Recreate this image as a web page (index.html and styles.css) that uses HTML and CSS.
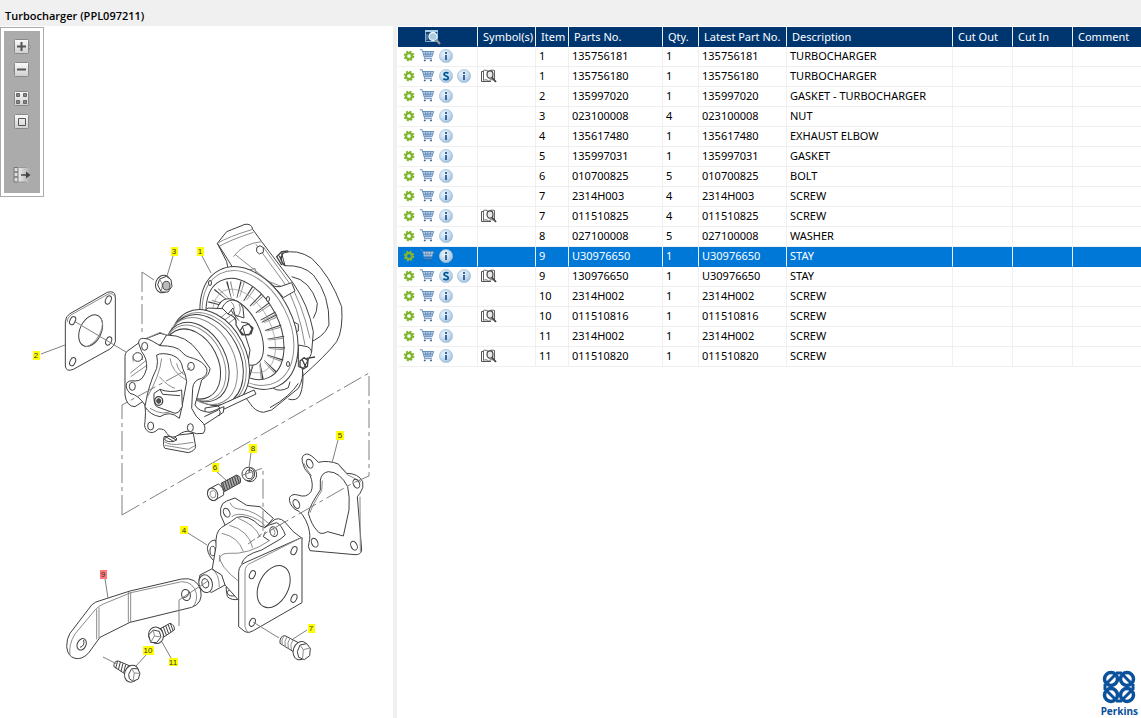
FILE: index.html
```html
<!DOCTYPE html>
<html lang="en">
<head>
<meta charset="utf-8">
<title>Turbocharger (PPL097211)</title>
<link rel="stylesheet" href="styles.css">
</head>
<body>
<svg class="sprite" aria-hidden="true">
  <defs>
    <radialGradient id="ball" cx=".4" cy=".35" r=".7"><stop offset="0" stop-color="#eef6fc"/><stop offset=".6" stop-color="#c2d9ed"/><stop offset="1" stop-color="#9bbcd9"/></radialGradient>
    <linearGradient id="key" x1="0" y1="0" x2="0" y2="1"><stop offset="0" stop-color="#fafafa"/><stop offset="1" stop-color="#cfcfcf"/></linearGradient>
    <linearGradient id="fade"><stop offset="0" stop-color="#eee"/><stop offset="1" stop-color="#ababab"/></linearGradient>
  </defs>
  <symbol id="gear" viewBox="0 0 12 12"><circle cx="6" cy="6" r="4.300" fill="none" stroke="#80b630" stroke-width="2" stroke-dasharray="1.900 1.477"/><circle cx="6" cy="6" r="3" fill="none" stroke="#80b630" stroke-width="2.300"/></symbol>
  <symbol id="cart" viewBox="0 0 18 16"><path d="M4 3.500H16.500L14.500 9.500H5.500Z" fill="#c5d8ea"/><path d="M1 1.500H3.500L6.500 11.500H14.500M4 3.500H16.500L14.500 9.500H6M7 3.500L8 9.500M10 3.500V9.500M13.500 3.500L12 9.500M5 6.500H15.500" fill="none" stroke="#5a86b8"/><circle cx="6.500" cy="13.500" r="1.100" fill="#365f94"/><circle cx="13.500" cy="13.500" r="1.100" fill="#365f94"/></symbol>
  <symbol id="info" viewBox="0 0 14 14"><circle cx="7" cy="7" r="6.600" fill="url(#ball)" stroke="#a4c1da" stroke-width=".7"/><path d="M6 3h2v2H6zM6 6h2v5H6z" fill="#39699c"/></symbol>
  <symbol id="sub" viewBox="0 0 14 14"><circle cx="7" cy="7" r="6.600" fill="url(#ball)" stroke="#a4c1da" stroke-width=".7"/><path d="M9.500 4.400C8 3.200 5 3.300 5 5.200S9.300 6.700 9.300 8.900 6 11 4.400 9.700" fill="none" stroke="#00589a" stroke-width="1.800"/></symbol>
  <symbol id="book" viewBox="0 0 16 14"><path d="M2.500 1.500C4 .8 6 1 7.500 2.500 9 1 11.500 .8 13.500 1.500V11C11 10.500 9 10.500 7.500 12 6 10.500 4 10.500 2.500 11.500Z" fill="#fff" stroke="#666"/><path d="M2 2.500H.5V12.500H10" fill="none" stroke="#555"/><ellipse cx="9" cy="5.500" rx="3" ry="3.700" fill="#e8ebec" stroke="#444" stroke-width="1.200"/><path d="M11 8.500L15 13" stroke="#444" stroke-width="1.800"/></symbol>
</svg>

<header class="titlebar"><h1>Turbocharger (PPL097211)</h1></header>
<main class="workspace">
  <section class="drawing" aria-label="Parts drawing">
    <div class="tools">
      <div class="tools-inner">
        <button aria-label="Zoom in"><svg viewBox="0 0 18 16"><path d="M15.500 5L17.500 8 15.500 11" fill="#ddd" stroke="#888"/><rect x="1.500" y=".5" width="14" height="14" rx="1" fill="url(#key)" stroke="#888"/><path d="M4 7.500H13M8.500 3V12" stroke="#555" stroke-width="2"/></svg></button>
        <button aria-label="Zoom out"><svg viewBox="0 0 18 16"><path d="M2 5L.5 8 2 11" fill="#ddd" stroke="#888"/><rect x="1.500" y=".5" width="14" height="14" rx="1" fill="url(#key)" stroke="#888"/><path d="M4 7.500H13" stroke="#555" stroke-width="2"/></svg></button>
        <button class="group" aria-label="Fit all"><svg viewBox="0 0 18 16"><rect x="1.500" y=".5" width="14" height="14" rx="1" fill="url(#key)" stroke="#888"/><path d="M3.500 2.500h3v3h-3zM10.500 2.500h3v3h-3zM3.500 9.500h3v3h-3zM10.500 9.500h3v3h-3z" fill="#888" stroke="#666"/></svg></button>
        <button aria-label="Actual size"><svg viewBox="0 0 18 16"><rect x="1.500" y=".5" width="14" height="14" rx="1" fill="url(#key)" stroke="#888"/><path d="M5.500 4.500h7v7h-7z" fill="none" stroke="#555"/></svg></button>
        <button class="last" aria-label="Hide list"><svg viewBox="0 0 18 16"><rect x="5" y="1" width="12" height="14" fill="url(#fade)"/><path d="M1 .5h4v4.500H1zM1 5h4v5H1zM1 10h4v5H1z" fill="#ddd" stroke="#777"/><path d="M6 .5h7M6 15h7" stroke="#999"/><path d="M8 8h6" stroke="#444" stroke-width="1.500"/><path d="M13 4.500L17.500 8 13 11.500z" fill="#444"/></svg></button>
      </div>
    </div>

    <svg class="diagram" viewBox="0 26 393 692" role="img" aria-label="Exploded view of turbocharger">
      <!-- hot pipe and elbow behind the housing -->
      <g transform="translate(230 215) scale(.33333)" class="ink">
        <path d="M155 115Q200 100 245 130Q300 180 335 275Q340 345 320 380Q290 420 210 490L130 520 90 450 230 385Q280 370 297 330Q300 240 250 180Q220 150 165 152Z"/>
        <path d="M165 152Q145 135 160 113M155 150L140 125 155 110 175 108M148 122L160 150" class="line" stroke-width="4"/>
        <path d="M185 185Q240 195 262 265Q262 290 250 310" class="line"/>
        <path d="M-38 85L-10 50 45 28Q65 25 68 43L95 80 190 205Q235 270 250 350L245 410 190 500 20 300 -10 140Z"/>
        <path d="M-38 85Q-5 65 68 43M-34 95Q0 75 70 52M10 125Q40 85 95 80M78 88L160 200Q205 270 225 390M100 96L175 200Q215 260 240 370M15 118L130 210M60 165L75 160 82 185 155 215" class="mid"/>
        <path d="M105 195Q125 218 150 215L185 203 195 228 160 248Q145 225 105 195Z"/>
        <path d="M90 92l10 6 0 14-12 5-8-7 0-12z"/>
        <path d="M-38 85L-25 105 10 160" class="line"/>
        <path d="M190 320l15 8 0 20-15 5M190 400q30 0 35 25l-10 25-25-5" class="line"/>
      </g>
      <!-- compressor volute foot -->
      <g transform="translate(220 325) scale(.33333)" class="ink">
        <path d="M55 165Q65 205 90 235Q105 260 130 262L155 255 235 190Q252 160 247 130L230 90Z"/>
        <path d="M150 248Q210 215 235 175M205 222Q230 230 240 210Q252 180 248 140M160 190Q180 202 205 188L210 170" class="line"/>
        <path d="M235 60L262 65Q282 75 270 95L250 130 235 125Z"/><path d="M240 108l12-10 12 8-2 18-12 8-10-8zM247 105l10 20M260 100l25-4" class="line" stroke-width="4"/>
      </g>
      <!-- back plate and fins -->
      <g class="ink">
        <ellipse cx="249" cy="328" rx="44" ry="65" transform="rotate(-27 249 328)"/>
        <ellipse cx="248" cy="328" rx="41" ry="61" transform="rotate(-27 248 328)" class="mid"/>
        <ellipse cx="245" cy="329" rx="34" ry="54" transform="rotate(-27 245 329)"/>
        <g class="line">
          <ellipse cx="246" cy="330" rx="26" ry="44" transform="rotate(-27 246 330)" stroke-width="17" stroke-dasharray="1 9"/>
          <ellipse cx="247" cy="330" rx="26" ry="44" transform="rotate(-24 247 330)" stroke-width="15" stroke-dasharray=".8 9.200" class="mid"/>
          <ellipse cx="244" cy="331" rx="27" ry="45" transform="rotate(-27 244 331)" class="mid" stroke-width=".6"/>
        </g>
        <ellipse cx="240" cy="332" rx="19" ry="36" transform="rotate(-27 240 332)"/>
        <ellipse cx="210" cy="283" rx="1.500" ry="2.500"/><ellipse cx="268" cy="299" rx="1.500" ry="2.500"/><ellipse cx="288" cy="364" rx="1.500" ry="2.500"/>
      </g>
      <!-- bearing housing -->
      <g class="ink">
        <path d="M196 318L208 308 230 309 242 325 250 350 246 375 238 388 210 400Z"/>
        <path d="M218 320L232 308M221 323L235 312M224 327L238 316" class="mid"/>
        <ellipse cx="210" cy="358" rx="36" ry="51" transform="rotate(-27 210 358)"/>
        <ellipse cx="208" cy="359" rx="35" ry="49" transform="rotate(-27 208 359)" class="mid"/>
        <ellipse cx="206" cy="360" rx="34" ry="48" transform="rotate(-27 206 360)"/>
        <ellipse cx="202" cy="361" rx="32" ry="46" transform="rotate(-27 202 361)" class="mid"/>
        <ellipse cx="197" cy="362" rx="29" ry="42" transform="rotate(-27 197 362)"/>
        <ellipse cx="195" cy="363" rx="28" ry="40" transform="rotate(-27 195 363)" class="mid"/>
        <ellipse cx="192" cy="364" rx="26" ry="37" transform="rotate(-27 192 364)"/>
        <path d="M222 308Q226 300 233 300Q240 301 243 308L244 318 235 315 233 308 228 314Z"/>
        <path d="M228 314Q238 317 236 325L242 335 251 334 253 328 247 323 241 322M243 326l6-2 3 5-3 6-5 0-4-4z" stroke-width="1.200"/>
        <path d="M231 302Q236 306 233 312M239 304Q242 310 238 316" class="mid"/>
        <path d="M205 408L218 406 254 390 256 394 220 411 205 413Z"/><path d="M218 406Q223 410 219 415" class="line"/>
      </g>
      <!-- turbine inlet flange -->
      <g transform="translate(110 325) scale(.33333)" class="ink">
        <path d="M98 45L50 80Q45 85 45 95L45 210Q50 245 75 245L105 225 115 80 165 50 170 30 150 25Z"/>
        <path d="M98 45L150 22 168 30M60 145L110 105M62 155L115 118M70 110Q65 90 82 85Q98 88 98 105" class="mid"/>
        <ellipse cx="83" cy="96" rx="14" ry="13"/>
        <path d="M150 62L170 30Q230 30 265 80L300 130Q300 150 275 165L255 240Q265 260 300 262L342 245 340 262 285 298 240 320 180 300Z"/>
        <path d="M162 335Q158 365 165 370L235 383Q255 378 257 365L250 325Z"/>
        <path d="M163 350Q180 362 215 357L250 352M165 361L235 373 255 362" class="mid"/>
        <ellipse cx="182" cy="342" rx="18" ry="8"/><path d="M168 336L192 350M176 332L200 346" class="line"/>
        <path d="M86 55Q85 40 100 40Q115 40 130 50L150 62Q200 62 215 80Q225 95 250 100Q280 110 290 130Q295 150 275 160Q250 165 248 190L245 250Q255 275 280 295Q290 310 280 325Q260 330 240 320Q225 315 205 330Q185 345 170 325Q165 310 145 312Q130 328 115 320Q100 310 105 290Q108 260 105 240Q85 210 60 205Q45 190 50 175Q55 165 75 168Q100 170 110 130Q112 100 95 80Z"/>
        <path d="M140 90Q155 82 185 90Q215 100 218 130Q228 150 230 170L215 250 208 280Q180 255 150 275Q120 270 105 245Q115 180 140 130Q145 110 140 90Z"/>
        <path d="M148 155Q175 185 195 190M180 100Q185 140 228 165M110 220Q150 150 155 100M200 115Q205 140 225 150M120 250Q160 275 190 255" class="mid"/>
        <path d="M132 205L150 193Q180 205 215 195L217 245 205 262 195 265 140 245Q130 235 132 205ZM150 193L158 208 210 212"/>
        <ellipse cx="146" cy="228" rx="12" ry="13" stroke-width="4"/><ellipse cx="146" cy="228" rx="6" ry="7" fill="#555"/>
        <ellipse cx="104" cy="64" rx="9" ry="12"/><ellipse cx="67" cy="184" rx="9" ry="12"/><ellipse cx="122" cy="303" rx="9" ry="12"/><ellipse cx="241" cy="308" rx="9" ry="12"/><ellipse cx="243" cy="124" rx="10" ry="12"/>
        <path d="M283 275L325 255M325 250Q335 260 328 272" class="line"/>
      </g>
      <!-- gasket 2 -->
      <g transform="translate(20 280) scale(.33333)" class="ink">
        <path d="M136 125Q137 108 150 101L262 37Q285 30 286 50L286 185Q284 198 270 207L160 268Q138 277 136 258Z"/>
        <path d="M141 127Q142 112 153 105L265 42Q279 38 284 50" class="mid"/>
        <ellipse cx="212" cy="152" rx="32" ry="50" transform="rotate(25 212 152)"/><path d="M236 108Q258 125 238 165Q220 195 196 201" class="mid"/>
        <ellipse cx="265" cy="60" rx="8" ry="13" transform="rotate(24 265 60)"/><ellipse cx="158" cy="122" rx="8" ry="13" transform="rotate(24 158 122)"/><ellipse cx="158" cy="245" rx="8" ry="13" transform="rotate(24 158 245)"/><ellipse cx="266" cy="183" rx="8" ry="13" transform="rotate(24 266 183)"/>
      </g>
      <!-- nut 3 -->
      <g transform="translate(120 215) scale(.33333)" class="ink">
        <ellipse cx="129" cy="207" rx="22" ry="27" transform="rotate(20 129 207)"/><path d="M113 210l6-18 20-8 14 10 3 20-12 17-20 0z"/><path d="M119 192l8 16-3 22M127 208l20-4" class="mid"/><ellipse cx="139" cy="212" rx="11" ry="13" fill="#bbb"/>
      </g>
      <!-- gasket 5, bolt 6, washer 8 -->
      <g transform="translate(195 430) scale(.33333)" class="ink">
        <path d="M322 95Q318 75 335 72Q348 72 370 97Q400 90 430 102L455 130Q490 130 503 155Q508 172 495 190L487 200 500 360Q498 375 480 374L345 362Q337 350 342 338Q348 320 340 290Q325 245 300 238Q280 222 284 202Q292 190 308 195Q335 205 348 185Q357 165 345 135Q325 118 322 95Z"/>
        <path d="M376 150Q380 128 400 125Q435 125 458 170Q465 200 462 240L445 318 398 305Q375 318 365 300Q350 285 340 250Q345 225 376 180Z"/>
        <path d="M382 152L380 182Q355 220 345 248M432 106L457 134 498 155M495 200L496 365M327 100Q335 120 350 138" class="mid"/>
        <ellipse cx="344" cy="101" rx="9" ry="14" transform="rotate(-25 344 101)"/><ellipse cx="484" cy="161" rx="9" ry="14" transform="rotate(-25 484 161)"/><ellipse cx="304" cy="222" rx="9" ry="14" transform="rotate(-25 304 222)"/><ellipse cx="359" cy="338" rx="9" ry="14" transform="rotate(-25 359 338)"/><ellipse cx="477" cy="347" rx="9" ry="14" transform="rotate(-25 477 347)"/>
        <path d="M78 160L125 135Q140 140 136 158L88 185Z" fill="#aaa"/><path d="M83 158l8 25M90 154l8 25M97 150l8 25M104 146l8 25M111 142l8 25M118 139l8 24M125 136l8 24" class="line"/>
        <path d="M40 178L70 162Q88 172 86 195L58 212Q38 205 38 185Z"/><ellipse cx="53" cy="193" rx="15" ry="19" transform="rotate(-20 53 193)"/><path d="M46 185l10-4 7 8-2 12-9 3-7-8z" class="mid"/>
        <ellipse cx="165" cy="134" rx="20" ry="21"/><ellipse cx="160" cy="132" rx="19" ry="20"/><ellipse cx="163" cy="133" rx="11" ry="13"/><path d="M164 112l-2 17"/>
      </g>
      <!-- exhaust elbow 4 and bolt 7 -->
      <g transform="translate(180 500) scale(.33333)" class="ink">
        <path d="M82 145Q85 122 105 120L120 150 105 185Q85 170 82 145Z"/><ellipse cx="98" cy="153" rx="8" ry="14"/>
        <path d="M138 262L142 290Q155 302 175 298L185 260Z"/><ellipse cx="158" cy="278" rx="16" ry="10"/>
        <path d="M122 25Q125 8 140 3L165-6 200 16 240 20 280 55 240 100 135 75 122 45Z"/>
        <ellipse cx="140" cy="38" rx="9" ry="14" transform="rotate(-25 140 38)"/><path d="M150 8Q158 28 185 28Q225 32 268 72M155 50Q170 38 200 46Q235 55 256 78" class="mid"/>
        <path d="M108 140Q105 95 125 82Q155 65 170 52Q205 42 240 78L254 82 285 58Q305 50 325 78L340 95 366 115 270 230 175 300 135 255 97 205Z"/>
        <path d="M118 185Q115 160 145 160Q205 165 268 122M118 165Q118 200 175 243M125 100Q175 110 190 155M148 76Q205 90 218 143M175 55Q225 75 240 110" class="mid"/>
        <path d="M252 84Q262 75 290 68Q305 75 316 105L300 118 245 150Q190 165 185 192M268 122L250 110 256 95" class="line"/>
        <ellipse cx="281" cy="95" rx="11" ry="15" transform="rotate(-20 281 95)"/><ellipse cx="278" cy="97" rx="7" ry="10" class="mid"/>
        <path d="M60 225L95 207 125 225 135 255 95 277Q60 270 57 240Z"/><path d="M95 207Q118 220 118 262" class="mid"/><ellipse cx="77" cy="251" rx="20" ry="27" transform="rotate(-15 77 251)"/><ellipse cx="76" cy="250" rx="10" ry="14" transform="rotate(-15 76 250)"/>
        <path d="M176 215Q178 195 195 188L366 112 366 308 220 392Q205 402 195 395L176 380Z"/><path d="M366 112L215 188Q195 195 195 215L195 380Q198 395 208 398" class="mid"/>
        <ellipse cx="281" cy="260" rx="44" ry="67" transform="rotate(27 281 260)"/>
        <ellipse cx="217" cy="224" rx="8" ry="13" transform="rotate(24 217 224)"/><ellipse cx="342" cy="152" rx="8" ry="13" transform="rotate(24 342 152)"/><ellipse cx="342" cy="295" rx="8" ry="13" transform="rotate(24 342 295)"/><ellipse cx="217" cy="367" rx="8" ry="13" transform="rotate(24 217 367)"/>
        <path d="M300 430Q298 408 315 407L355 428 340 455Z"/><path d="M312 408q-10 12-5 25M321 411q-10 12-5 28M330 415q-10 12-5 30M339 420q-10 12-5 30" class="mid"/>
        <ellipse cx="362" cy="452" rx="22" ry="28" transform="rotate(20 362 452)"/><path d="M352 455l8-20 20-4 11 14-2 22-16 12-17-7z"/><path d="M360 435l10 14 20-5M370 449l-2 25" class="mid"/>
      </g>
      <!-- stay 9, bolts 10 and 11 -->
      <g transform="translate(55 560) scale(.33333)" class="ink">
        <path d="M35 260Q35 235 45 220L110 135Q120 125 135 122L225 93 380 57Q425 50 437 90Q445 130 410 142L225 187 135 232 100 280Q80 300 60 295Q38 290 35 260Z"/>
        <path d="M45 285Q40 255 60 222L120 150Q130 138 145 132L228 98 380 65Q415 65 424 100Q428 130 410 142M125 148V238M132 142V235M220 96V188M227 96V187" class="mid"/>
        <ellipse cx="80" cy="253" rx="13" ry="18" transform="rotate(25 80 253)"/><path d="M75 262Q90 258 86 240" class="line"/><ellipse cx="393" cy="105" rx="13" ry="17" transform="rotate(-15 393 105)"/><path d="M384 112Q400 115 402 95" class="line"/>
        <path d="M312 208L345 190Q360 195 358 210L325 232Z"/><path d="M318 205l9 24M325 201l9 24M332 197l9 24M339 193l9 23M346 190l8 22" class="line"/>
        <ellipse cx="303" cy="226" rx="22" ry="25" transform="rotate(-20 303 226)"/><path d="M281 225l14-15 18 4 5 17-13 17-18-1z"/><path d="M295 210l3 18 20 3M298 228l-10 18" class="mid"/>
        <path d="M177 320Q175 303 190 303L230 320 215 345Z"/><path d="M188 303l-6 22M196 306l-6 24M204 310l-6 24M212 314l-6 24M220 317l-6 24" class="line"/>
        <ellipse cx="230" cy="341" rx="21" ry="26" transform="rotate(20 230 341)"/><path d="M221 343l9-17 18 0 7 14-5 17-16 7-11-8z"/><path d="M230 326l8 13 17 1M238 339l-4 24" class="mid"/>
      </g>
      <!-- assembly axes -->
      <path class="axis" d="M142 272V335M122 515V405L192 367M122 515L369 373V476L353 483 257 538M243 475L263 468V533L248 544"/>
      <!-- leader lines -->
      <path class="leader" d="M154 280L142 272M74 321L126 352M179 626V600L208 581M253 622L279 638M103 657L117 664M173 256L167 276M202 256L211 273M41 354L65 345M338 440L332 463M251 453L249 468M217 472L226 480M188 533L207 545M105 579L108 598M307 630L293 639M146 655L136 666M171 658L162 642"/>
      <g class="tags">
        <path d="M171 247h7v9h-7zM197 247h7v9h-7zM33 351h7v9h-7zM336 431h8v9h-8zM249 444h8v9h-8zM212 463h7v9h-7zM180 526h8v8h-8zM308 624h7v9h-7zM143 646h11v9h-11zM169 658h9v8h-9z" fill="#ff0"/><path d="M100 570h7v9h-7z" fill="#ff7878"/>
        <text x="174" y="254">3</text><text x="200" y="254">1</text><text x="36" y="358">2</text><text x="340" y="438">5</text><text x="253" y="451">8</text><text x="215" y="470">6</text><text x="184" y="533">4</text><text x="103" y="577">9</text><text x="311" y="631">7</text><text x="148" y="653">10</text><text x="173" y="665">11</text>
      </g>
    </svg>
  </section>

  <section class="parts">
    <table>
      <colgroup><col class="c-actions"><col class="c-symbol"><col class="c-item"><col class="c-part"><col class="c-qty"><col class="c-latest"><col class="c-desc"><col class="c-cut"><col class="c-cut"><col></colgroup>
      <thead><tr><th aria-label="Actions"><svg class="head-icon" viewBox="0 0 18 18"><path d="M1.500 2.500h12v11h-12z" fill="#173f6c" stroke="#79add4"/><path d="M1 3h13" stroke="#a5cde9" stroke-width="2"/><path d="M3 6v6" stroke="#79add4"/><circle cx="9" cy="8.500" r="4" fill="#a9cce4" stroke="#eef6fb" stroke-width="1.300"/><path d="M12 11.500L16 16" stroke="#9c9c9c" stroke-width="2"/></svg></th><th>Symbol(s)</th><th>Item</th><th>Parts No.</th><th>Qty.</th><th>Latest Part No.</th><th>Description</th><th>Cut Out</th><th>Cut In</th><th>Comment</th></tr></thead>
      <tbody>
        <tr><td><div class="acts"><button aria-label="Options"><svg class="gear"><use href="#gear"/></svg></button><button aria-label="Add to cart"><svg class="cart"><use href="#cart"/></svg></button><button aria-label="Information"><svg class="ball"><use href="#info"/></svg></button></div></td><td></td><td>1</td><td>135756181</td><td>1</td><td>135756181</td><td>TURBOCHARGER</td><td></td><td></td><td></td></tr>
        <tr><td><div class="acts"><button aria-label="Options"><svg class="gear"><use href="#gear"/></svg></button><button aria-label="Add to cart"><svg class="cart"><use href="#cart"/></svg></button><button aria-label="Superseded"><svg class="ball"><use href="#sub"/></svg></button><button aria-label="Information"><svg class="ball"><use href="#info"/></svg></button></div></td><td><svg class="book"><use href="#book"/></svg></td><td>1</td><td>135756180</td><td>1</td><td>135756180</td><td>TURBOCHARGER</td><td></td><td></td><td></td></tr>
        <tr><td><div class="acts"><button aria-label="Options"><svg class="gear"><use href="#gear"/></svg></button><button aria-label="Add to cart"><svg class="cart"><use href="#cart"/></svg></button><button aria-label="Information"><svg class="ball"><use href="#info"/></svg></button></div></td><td></td><td>2</td><td>135997020</td><td>1</td><td>135997020</td><td>GASKET - TURBOCHARGER</td><td></td><td></td><td></td></tr>
        <tr><td><div class="acts"><button aria-label="Options"><svg class="gear"><use href="#gear"/></svg></button><button aria-label="Add to cart"><svg class="cart"><use href="#cart"/></svg></button><button aria-label="Information"><svg class="ball"><use href="#info"/></svg></button></div></td><td></td><td>3</td><td>023100008</td><td>4</td><td>023100008</td><td>NUT</td><td></td><td></td><td></td></tr>
        <tr><td><div class="acts"><button aria-label="Options"><svg class="gear"><use href="#gear"/></svg></button><button aria-label="Add to cart"><svg class="cart"><use href="#cart"/></svg></button><button aria-label="Information"><svg class="ball"><use href="#info"/></svg></button></div></td><td></td><td>4</td><td>135617480</td><td>1</td><td>135617480</td><td>EXHAUST ELBOW</td><td></td><td></td><td></td></tr>
        <tr><td><div class="acts"><button aria-label="Options"><svg class="gear"><use href="#gear"/></svg></button><button aria-label="Add to cart"><svg class="cart"><use href="#cart"/></svg></button><button aria-label="Information"><svg class="ball"><use href="#info"/></svg></button></div></td><td></td><td>5</td><td>135997031</td><td>1</td><td>135997031</td><td>GASKET</td><td></td><td></td><td></td></tr>
        <tr><td><div class="acts"><button aria-label="Options"><svg class="gear"><use href="#gear"/></svg></button><button aria-label="Add to cart"><svg class="cart"><use href="#cart"/></svg></button><button aria-label="Information"><svg class="ball"><use href="#info"/></svg></button></div></td><td></td><td>6</td><td>010700825</td><td>5</td><td>010700825</td><td>BOLT</td><td></td><td></td><td></td></tr>
        <tr><td><div class="acts"><button aria-label="Options"><svg class="gear"><use href="#gear"/></svg></button><button aria-label="Add to cart"><svg class="cart"><use href="#cart"/></svg></button><button aria-label="Information"><svg class="ball"><use href="#info"/></svg></button></div></td><td></td><td>7</td><td>2314H003</td><td>4</td><td>2314H003</td><td>SCREW</td><td></td><td></td><td></td></tr>
        <tr><td><div class="acts"><button aria-label="Options"><svg class="gear"><use href="#gear"/></svg></button><button aria-label="Add to cart"><svg class="cart"><use href="#cart"/></svg></button><button aria-label="Information"><svg class="ball"><use href="#info"/></svg></button></div></td><td><svg class="book"><use href="#book"/></svg></td><td>7</td><td>011510825</td><td>4</td><td>011510825</td><td>SCREW</td><td></td><td></td><td></td></tr>
        <tr><td><div class="acts"><button aria-label="Options"><svg class="gear"><use href="#gear"/></svg></button><button aria-label="Add to cart"><svg class="cart"><use href="#cart"/></svg></button><button aria-label="Information"><svg class="ball"><use href="#info"/></svg></button></div></td><td></td><td>8</td><td>027100008</td><td>5</td><td>027100008</td><td>WASHER</td><td></td><td></td><td></td></tr>
        <tr class="selected" aria-selected="true"><td><div class="acts"><button aria-label="Options"><svg class="gear"><use href="#gear"/></svg></button><button aria-label="Add to cart"><svg class="cart"><use href="#cart"/></svg></button><button aria-label="Information"><svg class="ball"><use href="#info"/></svg></button></div></td><td></td><td>9</td><td>U30976650</td><td>1</td><td>U30976650</td><td>STAY</td><td></td><td></td><td></td></tr>
        <tr><td><div class="acts"><button aria-label="Options"><svg class="gear"><use href="#gear"/></svg></button><button aria-label="Add to cart"><svg class="cart"><use href="#cart"/></svg></button><button aria-label="Superseded"><svg class="ball"><use href="#sub"/></svg></button><button aria-label="Information"><svg class="ball"><use href="#info"/></svg></button></div></td><td><svg class="book"><use href="#book"/></svg></td><td>9</td><td>130976650</td><td>1</td><td>U30976650</td><td>STAY</td><td></td><td></td><td></td></tr>
        <tr><td><div class="acts"><button aria-label="Options"><svg class="gear"><use href="#gear"/></svg></button><button aria-label="Add to cart"><svg class="cart"><use href="#cart"/></svg></button><button aria-label="Information"><svg class="ball"><use href="#info"/></svg></button></div></td><td></td><td>10</td><td>2314H002</td><td>1</td><td>2314H002</td><td>SCREW</td><td></td><td></td><td></td></tr>
        <tr><td><div class="acts"><button aria-label="Options"><svg class="gear"><use href="#gear"/></svg></button><button aria-label="Add to cart"><svg class="cart"><use href="#cart"/></svg></button><button aria-label="Information"><svg class="ball"><use href="#info"/></svg></button></div></td><td><svg class="book"><use href="#book"/></svg></td><td>10</td><td>011510816</td><td>1</td><td>011510816</td><td>SCREW</td><td></td><td></td><td></td></tr>
        <tr><td><div class="acts"><button aria-label="Options"><svg class="gear"><use href="#gear"/></svg></button><button aria-label="Add to cart"><svg class="cart"><use href="#cart"/></svg></button><button aria-label="Information"><svg class="ball"><use href="#info"/></svg></button></div></td><td></td><td>11</td><td>2314H002</td><td>1</td><td>2314H002</td><td>SCREW</td><td></td><td></td><td></td></tr>
        <tr><td><div class="acts"><button aria-label="Options"><svg class="gear"><use href="#gear"/></svg></button><button aria-label="Add to cart"><svg class="cart"><use href="#cart"/></svg></button><button aria-label="Information"><svg class="ball"><use href="#info"/></svg></button></div></td><td><svg class="book"><use href="#book"/></svg></td><td>11</td><td>011510820</td><td>1</td><td>011510820</td><td>SCREW</td><td></td><td></td><td></td></tr>
      </tbody>
    </table>
    <div class="brand">
      <svg viewBox="0 0 34 36" aria-hidden="true"><g fill="none" stroke="#0a519c" stroke-width="3.500"><circle cx="9" cy="10" r="6.500"/><circle cx="25" cy="10" r="6.500"/><circle cx="9" cy="26" r="6.500"/><circle cx="25" cy="26" r="6.500"/><path d="M5 14L13 6M21 6L29 14M5 22L13 30M21 30L29 22" stroke-width="3"/><path d="M14 4h6M14 32h6M3 15v6M31 15v6" stroke-width="3"/></g></svg>
      <span>Perkins</span>
    </div>
  </section>
</main>
</body>
</html>
```
FILE: styles.css
```css
* { box-sizing: border-box; }

body {
  margin: 0;
  min-height: 100vh;
  display: flex;
  flex-direction: column;
  background: #fff;
  color: #000;
  font: 11px/16px "Noto Sans", "Open Sans", sans-serif;
}

button {
  display: block;
  padding: 0;
  border: 0;
  background: none;
}

svg { display: block; }

.sprite {
  position: absolute;
  width: 0;
  height: 0;
}

.titlebar {
  height: 26px;
  padding: 8px 5px 0;
  background: #f0f0f0;
}

.titlebar h1 {
  margin: 0;
  font: 600 11px/16px "Open Sans", "Noto Sans", sans-serif;
}

.workspace {
  flex: 1;
  display: grid;
  grid-template-columns: 397fr 744fr;
}

.drawing {
  position: relative;
  border-right: 4px solid #f0f0f0;
}

.diagram { width: 100%; }

.tools {
  position: absolute;
  top: 1px;
  left: 0;
  padding: 3px;
  border: 1px solid #ababab;
  background: #fff;
}

.tools-inner {
  display: flex;
  flex-direction: column;
  align-items: center;
  gap: 7px;
  width: 36px;
  padding: 8px 0 10px;
  background: #ababab;
}

.tools svg {
  width: 18px;
  height: 16px;
}

.tools .group { margin-top: 6px; }
.tools .last { margin-top: 30px; }

.ink {
  fill: #fff;
  stroke: #404040;
  stroke-width: 1;
  stroke-linejoin: round;
}

.ink[transform] { stroke-width: 3; }

.ink .line { fill: none; }

.ink .mid {
  fill: none;
  stroke: #8c8c8c;
}

.axis, .leader {
  fill: none;
  stroke: #808080;
}

.axis { stroke-dasharray: 20 4 4 4; }

.tags {
  fill: #333;
  font: 8px "Liberation Sans", Arial, sans-serif;
  text-anchor: middle;
}

.parts {
  display: flex;
  flex-direction: column;
  padding: 1px 0 1px 1px;
}

table {
  width: 100%;
  table-layout: fixed;
  border-collapse: separate;
  border-spacing: 0;
}

.c-actions { width: 80px; }
.c-symbol { width: 58px; }
.c-item { width: 33px; }
.c-part { width: 94px; }
.c-qty { width: 36px; }
.c-latest { width: 88px; }
.c-desc { width: 166px; }
.c-cut { width: 60px; }

th, td {
  height: 20px;
  padding: 0 3px 2px;
  border-right: 1px solid #f0f0f0;
  border-bottom: 1px solid #f0f0f0;
  text-align: left;
  white-space: nowrap;
}

th {
  padding: 0 5px;
  border-bottom-color: #003670;
  background: #003670;
  color: #fff;
  font-weight: 400;
}

th:last-child, td:last-child { border-right: 0; }

.selected td {
  border-bottom-color: #0078d7;
  background: #0078d7;
  color: #fff;
}

.head-icon {
  width: 18px;
  height: 18px;
  margin-left: 21px;
}

.acts {
  display: flex;
  align-items: center;
  gap: 4px;
  padding-left: 2px;
}

.gear {
  width: 12px;
  height: 12px;
}

.cart {
  width: 16px;
  height: 15px;
}

.ball {
  width: 14px;
  height: 14px;
}

.book {
  width: 16px;
  height: 14px;
}

.brand {
  align-self: flex-end;
  display: flex;
  flex-direction: column;
  align-items: center;
  margin-top: auto;
  padding-right: 3px;
  color: #0a519c;
}

.brand svg {
  width: 34px;
  height: 36px;
}

.brand span {
  font: bold 10px/12px "Noto Sans", "Open Sans", sans-serif;
}
```
